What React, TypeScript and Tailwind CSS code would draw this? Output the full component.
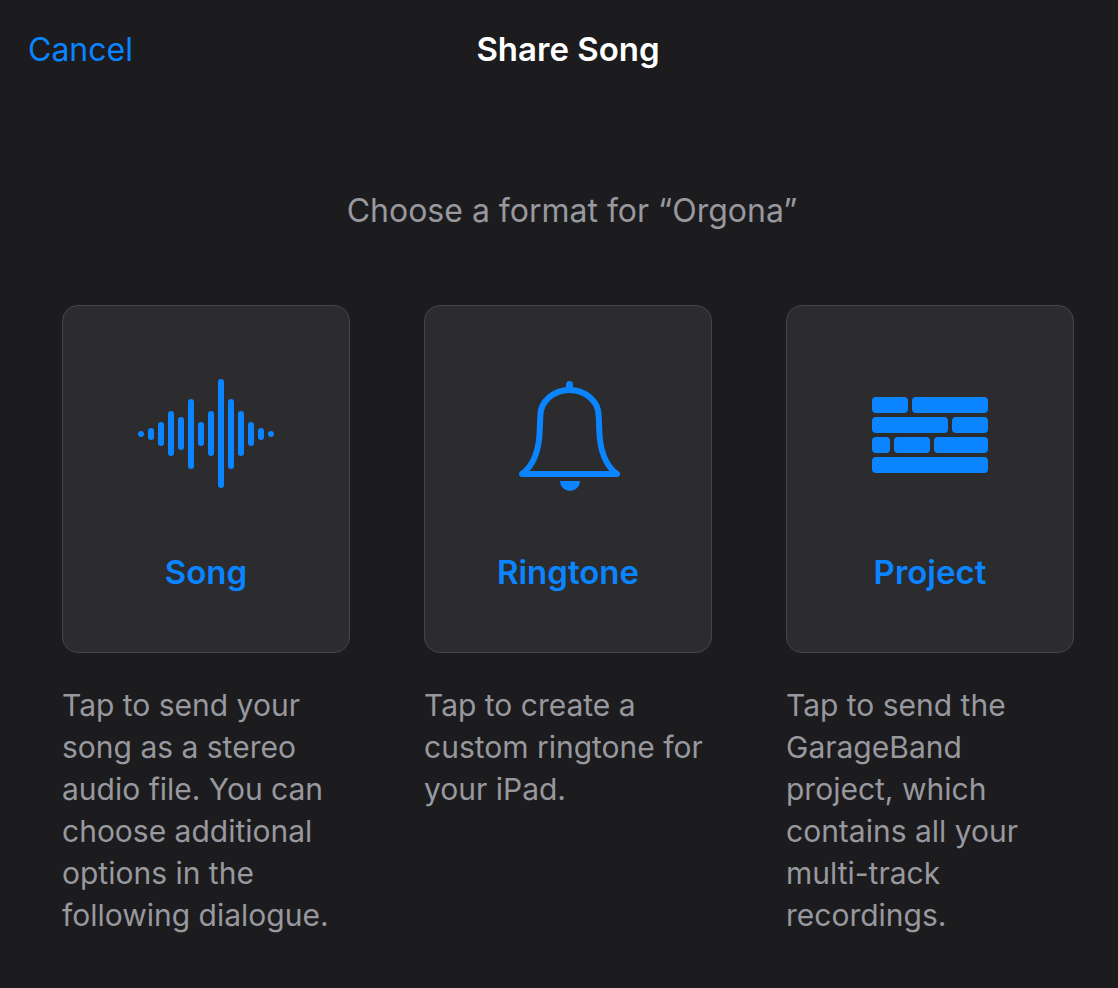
import type { ReactNode } from "react";

const WAVE_BARS: [number, number][] = [
  [52, 6], [49, 12], [43, 24], [32, 45], [38, 33], [20, 70], [43, 24],
  [32, 45], [0, 109], [20, 70], [32, 45], [43, 24], [49, 12], [52, 6],
];

const BRICKS: [number, number, number][] = [
  [0, 18, 36], [40, 18, 76],
  [0, 38, 76], [80, 38, 36],
  [0, 58, 18], [22, 58, 36], [62, 58, 54],
  [0, 78, 116],
];

function WaveIcon() {
  return (
    <svg width="136" height="112" viewBox="0 0 136 112" fill="currentColor" aria-hidden="true">
      {WAVE_BARS.map(([y, h], i) => (
        <rect key={i} x={i * 10} y={y} width="6" height={h} rx="3" />
      ))}
    </svg>
  );
}

function BellIcon() {
  return (
    <svg width="104" height="112" viewBox="-3 -2 104 112" fill="none" aria-hidden="true">
      <rect x="47" y="0" width="7" height="11" rx="3.5" fill="currentColor" />
      <path
        d="M3 93C14.500 84.500 20 71 20.700 50L21.300 35C21.300 20.500 34.500 9 50.500 9S79.700 20.500 79.700 35L80.300 50C81 71 86.500 84.500 98 93Z"
        stroke="currentColor"
        strokeWidth="6"
        strokeLinejoin="round"
      />
      <path d="M41 100H61A10 10 0 0 1 41 100Z" fill="currentColor" />
    </svg>
  );
}

function BricksIcon() {
  return (
    <svg width="116" height="112" viewBox="0 0 116 112" fill="currentColor" aria-hidden="true">
      {BRICKS.map(([x, y, w]) => (
        <rect key={`${x}-${y}`} x={x} y={y} width={w} height="16" rx="4" />
      ))}
    </svg>
  );
}

function FormatOption({ id, label, icon, children }: { id: string; label: string; icon: ReactNode; children: ReactNode }) {
  return (
    <li>
      <button
        type="button"
        aria-describedby={id}
        className="flex w-full flex-col items-center rounded-2xl border border-[#464648] bg-[#2c2c2e] pt-[73px] pb-[60px] text-[#0a84ff]"
      >
        {icon}
        <span className="mt-[61px] text-[33px] leading-10 font-semibold">{label}</span>
      </button>
      <p id={id} className="mt-[31px] text-[30px] leading-[42px] text-[#98989f]">
        {children}
      </p>
    </li>
  );
}

export default function App() {
  return (
    <div className="min-h-screen bg-[#1c1c1e] font-['Inter',sans-serif]">
      <header className="flex items-baseline pt-[27px] pr-[10px] pl-7">
        <div className="flex-1">
          <button type="button" className="block text-[32px] leading-[44px] text-[#0a84ff]">
            Cancel
          </button>
        </div>
        <h1 className="text-[33px] leading-[44px] font-semibold text-white">Share Song</h1>
        <div className="flex-1" />
      </header>
      <main className="pt-[117px] pr-11 pb-12 pl-[62px]">
        <h2 className="pl-2 text-center text-[32px] leading-[44px] text-[#98989f]">Choose a format for “Orgona”</h2>
        <ul className="mt-[72px] grid grid-cols-3 gap-[74px]">
          <FormatOption id="song-info" label="Song" icon={<WaveIcon />}>
            Tap to send your song as a stereo audio file. You can choose additional options in the following dialogue.
          </FormatOption>
          <FormatOption id="ringtone-info" label="Ringtone" icon={<BellIcon />}>
            Tap to create a custom ringtone for your iPad.
          </FormatOption>
          <FormatOption id="project-info" label="Project" icon={<BricksIcon />}>
            Tap to send the GarageBand project, which contains all your multi-track recordings.
          </FormatOption>
        </ul>
      </main>
    </div>
  );
}
